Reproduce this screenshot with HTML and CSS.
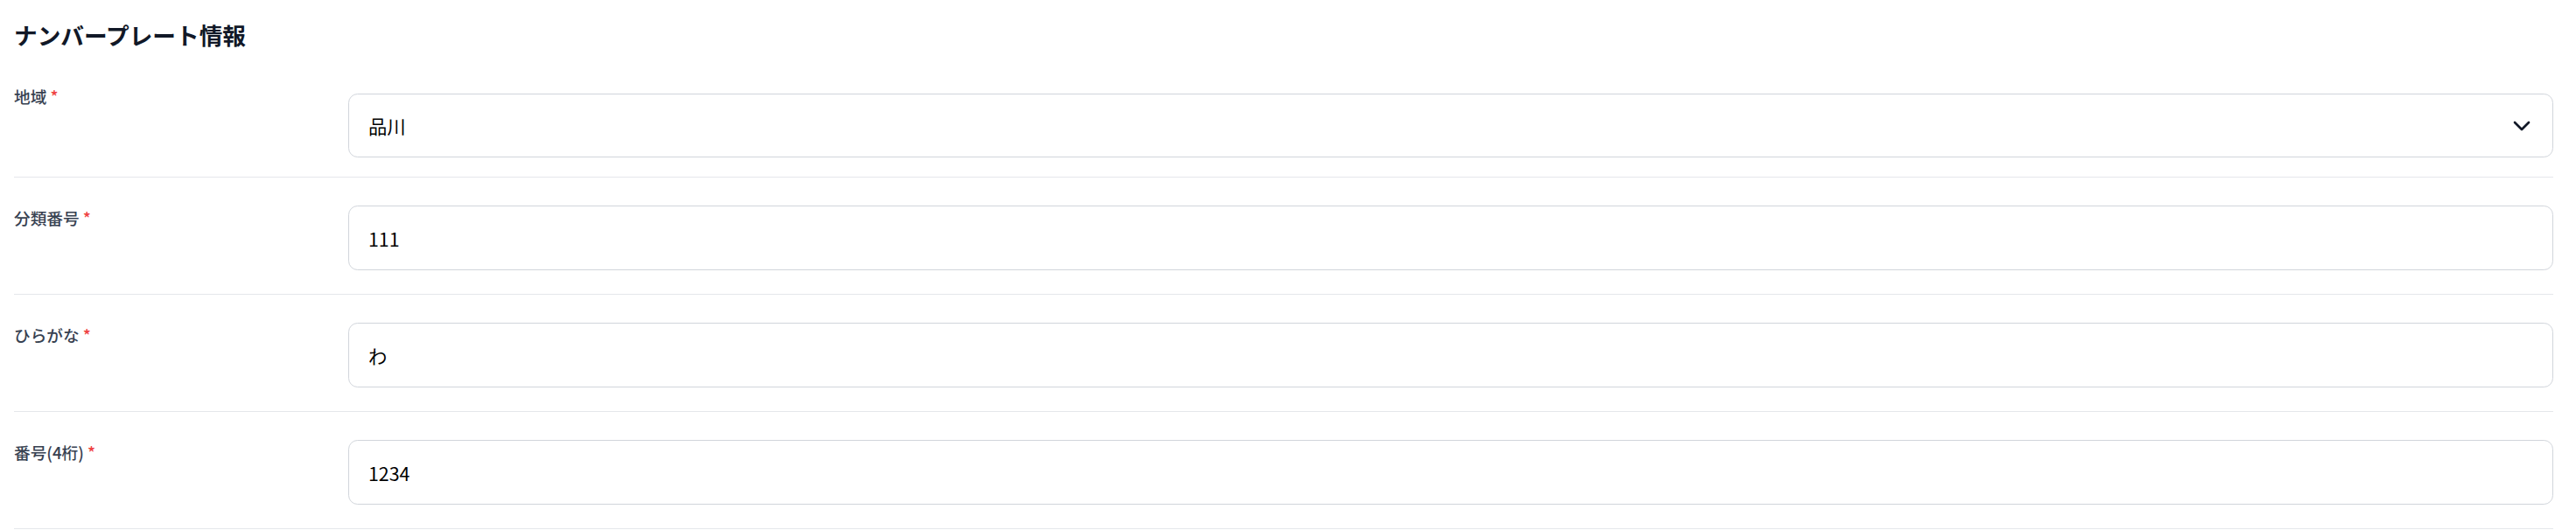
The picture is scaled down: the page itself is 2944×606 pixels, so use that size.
FILE: index.html
```html
<!DOCTYPE html>
<html lang="ja">
<head>
<meta charset="utf-8">
<title>ナンバープレート情報</title>
<link rel="stylesheet" href="styles.css">
</head>
<body>
<section class="panel">
  <h2 class="title">ナンバープレート情報</h2>
  <div class="rows">
    <div class="row row-first">
      <label class="label">地域 <span class="req">*</span></label>
      <div class="select">
        <span class="select-value">品川</span>
        <svg class="chev" width="32" height="32" viewBox="0 0 24 24" fill="none" stroke="#111827" stroke-width="2" stroke-linecap="round" stroke-linejoin="round"><path d="m6 9 6 6 6-6"/></svg>
      </div>
    </div>
    <div class="row">
      <label class="label">分類番号 <span class="req">*</span></label>
      <input class="field" type="text" value="111" readonly>
    </div>
    <div class="row">
      <label class="label">ひらがな <span class="req">*</span></label>
      <input class="field" type="text" value="わ" readonly>
    </div>
    <div class="row">
      <label class="label">番号(4桁) <span class="req">*</span></label>
      <input class="field" type="text" value="1234" readonly>
    </div>
  </div>
</section>
</body>
</html>
```

FILE: styles.css
```css
html, body {
  margin: 0;
  padding: 0;
  background: #ffffff;
}
body {
  font-family: "Noto Sans CJK JP", "Noto Sans", sans-serif;
  color: #111827;
}
.panel {
  padding: 20px 26px 0 16px;
}
.title {
  margin: 0 0 4px 0;
  font-size: 26.67px;
  line-height: 40px;
  font-weight: 700;
  color: #111827;
}
.rows {
  display: flex;
  flex-direction: column;
}
.row {
  display: grid;
  grid-template-columns: 382px 1fr;
  align-items: start;
  padding: 32px 0 27px 0;
  border-bottom: 1px solid #e5e7eb;
}
.row-first {
  padding-bottom: 22px;
}
.label {
  font-size: 18.67px;
  line-height: 28px;
  font-weight: 500;
  color: #374151;
}
.req {
  color: #ef4444;
}
.select,
.field {
  box-sizing: border-box;
  height: 74px;
  width: 100%;
  border: 1px solid #d1d5db;
  border-radius: 10.67px;
  background: #ffffff;
  font-family: "Noto Sans CJK JP", "Noto Sans", sans-serif;
  font-size: 21.33px;
  color: #000000;
}
.select {
  margin-top: 11px;
  height: 73px;
  display: flex;
  align-items: center;
  justify-content: space-between;
  padding: 0 19px 0 22px;
}
.field {
  display: block;
  padding: 0 22px;
  outline: none;
}
.chev {
  display: block;
}
```
